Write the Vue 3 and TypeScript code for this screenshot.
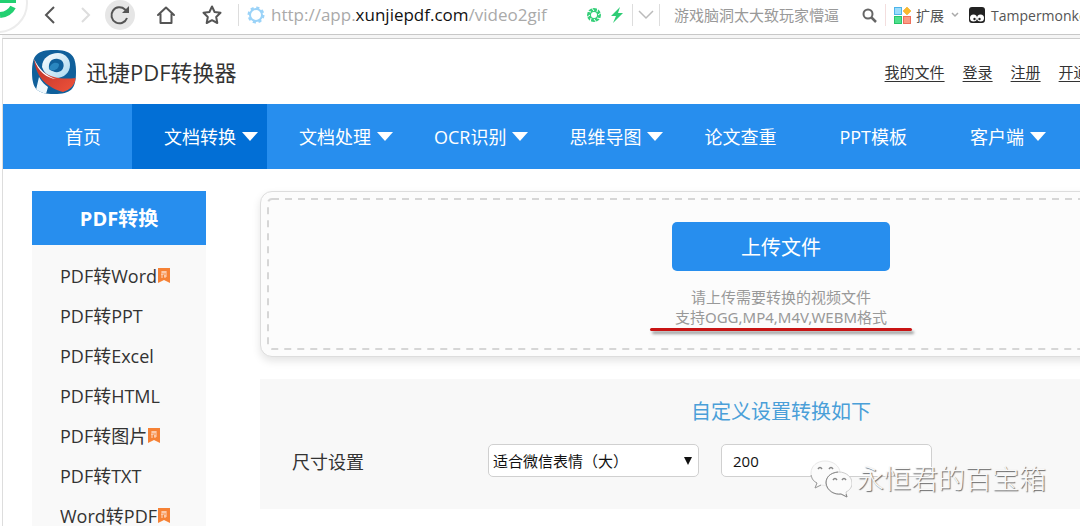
<script setup lang="ts">
import { ref } from 'vue'

interface NavItem {
  label: string
  caret: boolean
  active?: boolean
}
interface SideItem {
  label: string
  hot: boolean
}

const nav: NavItem[] = [
  { label: '首页', caret: false },
  { label: '文档转换', caret: true, active: true },
  { label: '文档处理', caret: true },
  { label: 'OCR识别', caret: true },
  { label: '思维导图', caret: true },
  { label: '论文查重', caret: false },
  { label: 'PPT模板', caret: false },
  { label: '客户端', caret: true },
]
const links: string[] = ['我的文件', '登录', '注册', '开通VIP']
const side: SideItem[] = [
  { label: 'PDF转Word', hot: true },
  { label: 'PDF转PPT', hot: false },
  { label: 'PDF转Excel', hot: false },
  { label: 'PDF转HTML', hot: false },
  { label: 'PDF转图片', hot: true },
  { label: 'PDF转TXT', hot: false },
  { label: 'Word转PDF', hot: true },
]
const preset = ref('large')
const size = ref('200')
</script>

<template>
  <div class="window">
    <header class="chrome">
      <div class="badge" aria-hidden="true">
        <svg width="30" height="34" viewBox="0 0 30 34">
          <circle cx="-2" cy="3" r="29" fill="#fff" stroke="#ececec" stroke-width="2" />
          <path d="M0 0H16V3H0Z" fill="#22d071" />
          <path d="M13 7A16 13 0 0 1 0 15" fill="none" stroke="#22d071" stroke-width="6" />
        </svg>
      </div>
      <div class="tools">
        <button type="button" aria-label="后退">
          <svg width="30" height="30" viewBox="0 0 30 30"><path d="M19 7L11 15L19 23" fill="none" stroke="#555" stroke-width="2" /></svg>
        </button>
        <button type="button" aria-label="前进">
          <svg width="30" height="30" viewBox="0 0 30 30"><path d="M12 8L19 15L12 22" fill="none" stroke="#ddd" stroke-width="2" /></svg>
        </button>
        <button type="button" aria-label="刷新">
          <svg width="30" height="30" viewBox="0 0 30 30">
            <circle cx="15" cy="15" r="15" fill="#e6e6e6" />
            <path d="M22 18A8 8 0 1 1 20 9.500L22 12" fill="none" stroke="#555" stroke-width="2" />
            <path d="M24 6V13H17Z" fill="#555" />
          </svg>
        </button>
        <button type="button" aria-label="主页">
          <svg width="30" height="30" viewBox="0 0 30 30">
            <path d="M7 15L15 7.500L23 15M9.500 14V23H20.500V14" fill="none" stroke="#555" stroke-width="2" stroke-linejoin="round" stroke-linecap="round" />
          </svg>
        </button>
        <button type="button" aria-label="收藏">
          <svg width="30" height="30" viewBox="0 0 30 30">
            <path d="M15 6.500L17.600 12L23.500 12.800L19.200 17L20.300 23L15 20.200L9.700 23L10.800 17L6.500 12.800L12.400 12Z" fill="none" stroke="#555" stroke-width="2" stroke-linejoin="round" />
          </svg>
        </button>
      </div>
      <div class="address">
        <svg width="18" height="18" viewBox="0 0 18 18">
          <circle cx="9" cy="9" r="6" fill="none" stroke="#9bd3f8" stroke-width="2" />
          <circle cx="9" cy="9" r="7" fill="none" stroke="#9bd3f8" stroke-width="3" stroke-dasharray="3 2.500" />
        </svg>
        <span class="url">http://app.<b>xunjiepdf.com</b>/video2gif</span>
        <svg width="16" height="16" viewBox="0 0 16 16">
          <circle cx="8" cy="8" r="5" fill="none" stroke="#35cf79" stroke-width="4" />
          <path d="M8 4L5 0M11 5L12 0M12 8L16 5M11 11L16 12M8 12L11 16M5 11L4 16M4 8L0 11M5 5L0 4" stroke="#fff" stroke-width="1" />
        </svg>
        <svg class="bolt" width="14" height="18" viewBox="0 0 14 18"><path d="M10 1L1 10H6L3 17L13 7H8Z" fill="#2fcc75" /></svg>
        <button class="drop" type="button" aria-label="展开">
          <svg width="16" height="10" viewBox="0 0 16 10"><path d="M1 1L8 8L15 1" fill="none" stroke="#bbb" stroke-width="1.500" /></svg>
        </button>
      </div>
      <div class="search">
        <input type="text" aria-label="搜索" placeholder="游戏脑洞太大致玩家懵逼" />
        <button type="button" aria-label="搜索">
          <svg width="15" height="15" viewBox="0 0 15 15">
            <circle cx="6" cy="6" r="4.500" fill="none" stroke="#666" stroke-width="2" />
            <path d="M9.500 9.500L14 14" stroke="#666" stroke-width="2.500" />
          </svg>
        </button>
      </div>
      <div class="plugins">
        <svg width="17" height="17" viewBox="0 0 17 17">
          <rect x="0.500" y="0.500" width="7" height="7" fill="#9bdcfb" stroke="#4cb4ea" />
          <path d="M13 0L17 4L13 8L9 4Z" fill="#fbb92c" stroke="#e9a417" stroke-width="0.500" />
          <rect x="0.500" y="9.500" width="7" height="7" fill="#4fe08d" stroke="#25c468" />
          <rect x="9.500" y="9.500" width="7" height="7" fill="#fb9a84" stroke="#ee705b" />
        </svg>
        <span class="ext">扩展</span>
        <svg class="chev" width="8" height="6" viewBox="0 0 8 6"><path d="M1 1L4 4L7 1" fill="none" stroke="#aaa" stroke-width="1.500" /></svg>
        <svg width="16" height="16" viewBox="0 0 16 16">
          <rect width="16" height="16" rx="3" fill="#222" />
          <circle cx="4.500" cy="11" r="3.500" fill="#fff" />
          <circle cx="11.500" cy="11" r="3.500" fill="#fff" />
          <circle cx="5.500" cy="12" r="1.200" fill="#222" />
          <circle cx="10.500" cy="12" r="1.200" fill="#222" />
        </svg>
        <span class="tm">Tampermonkey</span>
      </div>
    </header>

    <div class="viewport">
      <div class="site">
        <div class="top">
          <svg width="44" height="44" viewBox="0 0 44 44">
            <defs>
              <clipPath id="tile"><path d="M22 0C39 0 44 5 44 22S39 44 22 44S0 39 0 22S5 0 22 0Z" /></clipPath>
              <linearGradient id="flag" x1="0" y1="0" x2="1" y2="1">
                <stop offset="0" stop-color="#b9302a" />
                <stop offset="1" stop-color="#f0533a" />
              </linearGradient>
              <linearGradient id="loop" x1="0" y1="0" x2="1" y2="1">
                <stop offset="0" stop-color="#ffffff" />
                <stop offset="1" stop-color="#a9d8ef" />
              </linearGradient>
            </defs>
            <g clip-path="url(#tile)">
              <rect width="44" height="44" fill="#10609b" />
              <path d="M10 17C10 8 18 3 26 3C33 3 38 9 38 15C38 23 31 29 22 28C16 26 12 23 10 17Z" fill="url(#loop)" />
              <path d="M17 19C16 12 20 8 26 9C32 10 33 16 30 20C27 23 22 23 17 19Z" fill="#10609b" />
              <path d="M17 19C18 14 23 11 27 14C27 19 23 21 19 20Z" fill="#2a86bf" />
              <path d="M2 9C8 22 18 31 44 28C43 35 38 40 31 42C17 38 4 29 2 9Z" fill="url(#flag)" />
              <path d="M2 9C7 19 14 26 24 29C15 28 6 22 2 9Z" fill="#fff" />
              <path d="M7 27C10 32 13 35 16 37L14 44H3Z" fill="#eef8fd" />
            </g>
          </svg>
          <h1>迅捷PDF转换器</h1>
          <div class="links"><a v-for="l in links" :key="l" href="#">{{ l }}</a></div>
        </div>

        <nav class="nav">
          <a v-for="n in nav" :key="n.label" href="#" :class="{ active: n.active }">
            {{ n.label }}
            <svg v-if="n.caret" class="caret" width="16" height="9" viewBox="0 0 16 9"><path d="M0 0H16L8 9Z" fill="#fff" /></svg>
          </a>
        </nav>

        <div class="body">
          <aside class="side">
            <h2>PDF转换</h2>
            <ul>
              <li v-for="s in side" :key="s.label">
                <a href="#">{{ s.label }}</a>
                <svg v-if="s.hot" width="12" height="15" viewBox="0 0 12 15">
                  <path d="M0 0H12V15L6 12L0 15Z" fill="#f68236" />
                  <path d="M3 4H9M5 3V5M7 3V5M3 6H9M4 6V10M6 8H9M7 7V10" stroke="#fff" stroke-width="0.700" fill="none" />
                </svg>
              </li>
            </ul>
          </aside>

          <main class="main">
            <section class="upload">
              <svg class="dashes" aria-hidden="true">
                <rect x="1" y="1" rx="4" width="100%" height="100%" />
              </svg>
              <button type="button">上传文件</button>
              <p>请上传需要转换的视频文件<br />支持OGG,MP4,M4V,WEBM格式</p>
              <div class="stroke"></div>
            </section>

            <section class="settings">
              <h3>自定义设置转换如下</h3>
              <div class="row">
                <label for="preset">尺寸设置</label>
                <div class="pick">
                  <select id="preset" v-model="preset">
                    <option value="large">适合微信表情（大）</option>
                    <option value="small">适合微信表情（小）</option>
                  </select>
                  <svg width="8" height="8" viewBox="0 0 8 8"><path d="M0 0H8L4 8Z" fill="#111" /></svg>
                </div>
                <input v-model="size" type="text" aria-label="尺寸" />
              </div>
            </section>
          </main>
        </div>
      </div>
    </div>

    <div class="mark">
      <svg width="42" height="38" viewBox="0 0 42 38">
        <g fill="#fbfbfb" stroke-linejoin="round">
          <path d="M15 1C7 1 1 6 1 13C1 17 3 20 7 23L5 28L11 25C20 27 30 22 30 13C30 6 23 1 15 1Z" stroke="#e8e8e8" />
          <path d="M1 15C2 19 3 21 7 23L5 28L11 25" fill="none" stroke="#999" />
          <path d="M29 12C21 12 16 17 16 23C16 30 23 35 31 34L37 37L36 32C40 30 42 27 42 23C42 17 36 12 29 12Z" stroke="#ccc" />
          <path d="M28 12C20 13 16 17 16 23C17 31 25 35 31 34L37 37L36 34" fill="none" stroke="#888" />
        </g>
        <path d="M8 9Q10 6 12 9M19 9Q21 6 23 9M23 20Q25 17 27 20M32 20Q34 17 36 20" fill="none" stroke="#888" stroke-width="1.500" />
      </svg>
      <span>永恒君的百宝箱</span>
    </div>
  </div>
</template>

<style>
body {
  margin: 0;
}
</style>

<style scoped>
.window {
  position: relative;
  display: flex;
  flex-direction: column;
  height: 100vh;
  overflow: hidden;
  background: #fff;
  color: #333;
  font-family: 'Open Sans', 'Noto Sans CJK SC', sans-serif;
  font-size: 18px;
}
button,
input,
select {
  font-family: inherit;
}
button {
  padding: 0;
  border: 0;
  background: none;
  cursor: pointer;
}
svg {
  display: block;
  flex: none;
}
h1,
h2,
h3,
p,
ul {
  margin: 0;
  padding: 0;
  font-weight: 400;
}
.chrome {
  display: flex;
  flex: none;
  align-items: center;
  height: 30px;
  padding-bottom: 4px;
  border-bottom: 1px solid #c8c8c8;
  white-space: nowrap;
}
.badge {
  align-self: flex-start;
  width: 35px;
  height: 30px;
}
.tools {
  display: flex;
  flex: none;
  gap: 16px;
}
.tools button {
  width: 30px;
  height: 30px;
}
.tools button:nth-child(2) {
  margin: 0 -11px;
}
.address {
  display: flex;
  align-items: center;
  flex: none;
  height: 22px;
  margin-left: 11px;
  padding-left: 8px;
  border-left: 1px solid #ddd;
}
.url {
  width: 315px;
  margin-left: 6px;
  color: #aaa;
  font-size: 17px;
  line-height: 22px;
}
.url b {
  color: #111;
  font-weight: 400;
}
.tools {
  margin-left: 5px;
}
.bolt {
  margin: 0 8px;
}
.drop {
  display: flex;
  align-items: center;
  height: 22px;
  padding: 0 5px;
  border: solid #ddd;
  border-width: 0 1px;
}
.search {
  display: flex;
  align-items: center;
  flex: none;
  height: 22px;
  padding: 0 8px 0 14px;
  border-right: 1px solid #f3dede;
}
.search input {
  width: 180px;
  margin-right: 8px;
  padding: 0;
  border: 0;
  outline: 0;
  font-size: 15px;
  line-height: 20px;
}
.search input::placeholder {
  color: #999;
}
.plugins {
  display: flex;
  align-items: center;
  margin-left: 8px;
  color: #555;
  font-size: 14px;
}
.ext {
  margin: 0 7px 0 5px;
}
.chev {
  margin-right: 10px;
}
.tm {
  margin-left: 6px;
}
.viewport {
  flex: 1;
  min-height: 0;
  margin: 3px 0 0 2px;
  overflow: hidden;
  border-top: 1px solid #ccc;
  border-left: 1px solid #ddd;
  box-shadow: 0 -3px #f5f5f5;
}
.site {
  min-width: 1328px;
}
.top {
  display: flex;
  align-items: center;
  height: 65px;
  padding-left: 29px;
}
.top h1 {
  margin-left: 10px;
  font-size: 22px;
  line-height: 32px;
}
.links {
  display: flex;
  gap: 18px;
  margin-left: 648px;
  font-size: 15px;
}
.links a {
  color: #333;
  text-underline-offset: 3px;
}
.nav {
  display: flex;
  padding-left: 30px;
  background: #278eee;
}
.nav a {
  position: relative;
  padding: 2px 31px 0 32px;
  color: #fff;
  font-size: 18px;
  line-height: 63px;
  text-decoration: none;
  white-space: nowrap;
}
.nav .active {
  background: #026fd6;
}
.caret {
  position: absolute;
  top: 28px;
  right: 9px;
}
.body {
  display: flex;
  gap: 54px;
  padding: 22px 29px 0;
}
.side {
  width: 174px;
  flex: none;
  background: #f9f9f9;
}
.side h2 {
  padding-top: 2px;
  background: #278eee;
  color: #fff;
  font-size: 20px;
  font-weight: 700;
  line-height: 52px;
  text-align: center;
}
.side ul {
  padding: 10px 0 10px 28px;
  list-style: none;
}
.side li {
  display: flex;
  align-items: center;
  gap: 1px;
  height: 40px;
}
.side a {
  color: #333;
  text-decoration: none;
}
.main {
  flex: 1;
}
.upload {
  position: relative;
  display: flex;
  flex-direction: column;
  align-items: center;
  padding: 30px 0 25px;
  border: 1px solid #ddd;
  border-radius: 12px;
  background: #fcfcfc;
  box-shadow: 0 4px 8px #e4e4e4;
}
.dashes {
  position: absolute;
  inset: 6px;
  width: calc(100% - 14px);
  height: calc(100% - 14px);
  overflow: visible;
}
.dashes rect {
  fill: none;
  stroke: #d6d6d6;
  stroke-width: 2px;
  stroke-dasharray: 7 6;
}
.upload button {
  position: relative;
  width: 218px;
  height: 49px;
  border-radius: 5px;
  background: #278eee;
  color: #fff;
  font-size: 20px;
}
.upload p {
  margin-top: 16px;
  color: #999;
  font-family: 'Noto Sans', 'Noto Sans CJK SC', sans-serif;
  font-size: 15px;
  line-height: 20px;
  text-align: center;
}
.stroke {
  width: 262px;
  height: 3px;
  margin-top: 1px;
  border-radius: 2px;
  background: #c81414;
  box-shadow: 2px 3px 3px #999;
}
.settings {
  margin-top: 22px;
  padding: 18px 32px 32px;
  background: #f8f8f8;
}
.settings h3 {
  color: #4a9fd8;
  font-size: 20px;
  line-height: 30px;
  text-align: center;
}
.row {
  display: flex;
  align-items: center;
  margin-top: 17px;
}
.row label {
  width: 196px;
}
.pick {
  position: relative;
  margin-right: 22px;
}
.pick svg {
  position: absolute;
  top: 13px;
  right: 7px;
  pointer-events: none;
}
.pick select,
.row input {
  display: block;
  box-sizing: border-box;
  width: 211px;
  height: 33px;
  border: 1px solid #d0d0d0;
  border-radius: 5px;
  background: #fff;
  color: #111;
  font-size: 15px;
}
.pick select {
  padding: 0 4px;
  appearance: none;
}
.row input {
  padding: 0 11px;
}
.mark {
  position: absolute;
  right: 34px;
  bottom: 28px;
  display: flex;
  align-items: center;
  gap: 5px;
  color: #f9f9f9;
  font-size: 27px;
  font-weight: 300;
  line-height: 38px;
  text-shadow: 1px 1px 1px #666;
}
</style>
